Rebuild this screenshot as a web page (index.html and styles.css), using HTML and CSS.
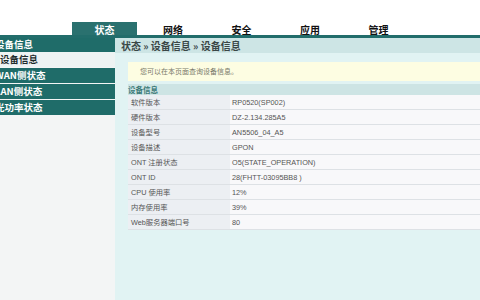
FILE: index.html
```html
<!DOCTYPE html>
<html lang="zh-CN">
<head>
    <meta charset="UTF-8">
    <meta name="viewport" content="width=device-width, initial-scale=1.0">
    <title>设备信息</title>
    <link rel="stylesheet" href="styles.css">
</head>
<body>
<div class="topbar">
    <ul class="tabs">
        <li class="tab active">状态</li>
        <li class="tab">网络</li>
        <li class="tab">安全</li>
        <li class="tab">应用</li>
        <li class="tab">管理</li>
    </ul>
</div>

<div class="layout">
    <div class="sidebar">
        <div class="menu-head">设备信息</div>
        <div class="menu-item selected">设备信息</div>
        <div class="menu-item">WAN侧状态</div>
        <div class="menu-item">LAN侧状态</div>
        <div class="menu-item">光功率状态</div>
    </div>

    <div class="main">
        <div class="crumbs">状态 &raquo; 设备信息 &raquo; 设备信息</div>
        <div class="content">
            <div class="notice">您可以在本页面查询设备信息。</div>
            <div class="section-title">设备信息</div>
            <table class="info-table">
                <tr><td class="label">软件版本</td><td>RP0520(SP002)</td></tr>
                <tr><td class="label">硬件版本</td><td>DZ-2.134.285A5</td></tr>
                <tr><td class="label">设备型号</td><td>AN5506_04_A5</td></tr>
                <tr><td class="label">设备描述</td><td>GPON</td></tr>
                <tr><td class="label">ONT 注册状态</td><td>O5(STATE_OPERATION)</td></tr>
                <tr><td class="label">ONT ID</td><td>28(FHTT-03095BB8 )</td></tr>
                <tr><td class="label">CPU 使用率</td><td>12%</td></tr>
                <tr><td class="label">内存使用率</td><td>39%</td></tr>
                <tr><td class="label">Web服务器端口号</td><td>80</td></tr>
            </table>
        </div>
    </div>
</div>
</body>
</html>
```

FILE: styles.css
```css
body {
    margin: 0;
    font-family: "Noto Sans CJK SC", sans-serif;
    background-color: #ffffff;
    height: 300px;
    overflow: hidden;
}
.topbar {
    padding-top: 22px;
    border-bottom: 3px solid #226d6b;
}
.tabs {
    list-style: none;
    margin: 0 0 0 72px;
    padding: 0;
    display: flex;
    gap: 3.5px;
}
.tab {
    width: 65px;
    height: 13px;
    line-height: 16px;
    text-align: center;
    font-size: 10px;
    font-weight: bold;
    color: #111;
}
.tab.active {
    background-color: #2a716f;
    color: #ffffff;
    line-height: 15px;
}
.layout {
    display: flex;
    height: 262px;
}
.sidebar {
    width: 120px;
    margin-left: -5px;
    background-color: #f3f5f5;
    flex-shrink: 0;
}
.menu-head, .menu-item {
    height: 15px;
    line-height: 15px;
    font-size: 9.5px;
    font-weight: bold;
    color: #ffffff;
    background-color: #1f6c69;
}
.menu-head {
    height: 14px;
    line-height: 13px;
}
.menu-item {
    margin-top: 1px;
}
.menu-item.selected {
    margin-top: 0;
    background-color: #eef3f3;
    color: #1d2b2b;
    padding-left: 5px;
}
.main {
    flex: 1;
    background-color: #e1f3f3;
}
.crumbs {
    height: 15px;
    line-height: 15px;
    padding-left: 6px;
    background-color: #cde5e5;
    font-size: 10px;
    font-weight: bold;
    color: #3a4747;
}
.content {
    padding: 9px 0 0 13px;
}
.notice {
    height: 19px;
    line-height: 19px;
    padding-left: 12px;
    background-color: #fdfde2;
    font-size: 7px;
    color: #7a7a6a;
}
.section-title {
    margin-top: 3px;
    height: 11px;
    line-height: 11px;
    background-color: #cde4e4;
    font-size: 7.5px;
    font-weight: bold;
    color: #3b7977;
}
.info-table {
    width: 100%;
    border-collapse: collapse;
    font-family: "Liberation Sans", "Noto Sans CJK SC", sans-serif;
    font-size: 7.3px;
    color: #555;
}
.info-table td {
    height: 14px;
    padding: 0 0 0 2px;
    border-bottom: 1px solid #dde1e5;
    background-color: #f8f8fa;
}
.info-table td.label {
    width: 99px;
    padding-left: 3px;
    background-color: #eceff3;
}
```
